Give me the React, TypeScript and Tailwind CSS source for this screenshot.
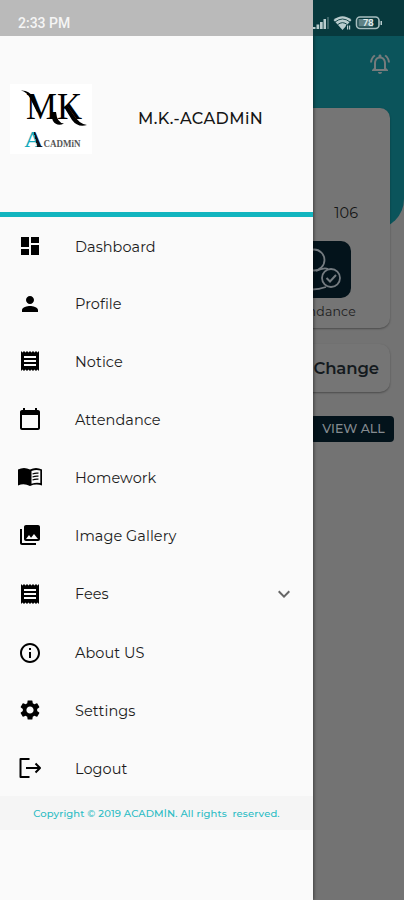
import type { ReactNode } from 'react'
import { IconType } from 'react-icons'
import {
  MdDashboard, MdPerson, MdReceipt, MdCalendarToday, MdPhotoLibrary,
  MdInfoOutline, MdSettings, MdKeyboardArrowDown, MdOutlineNotificationsActive,
} from 'react-icons/md'

const LogoutIcon = () => (
  <svg viewBox="0 0 24 24" className="size-6" fill="none" stroke="black" strokeWidth="2" strokeLinejoin="round">
    <path d="M11.500 3H2.500v18h9" />
    <path d="M8 12h13.500M17.500 7.500l4.500 4.500-4.500 4.500" />
  </svg>
)

const BookIcon = () => (
  <svg viewBox="0 0 24 24" className="size-6">
    <path d="M0 4.500Q6 1.500 12 4.500Q18 1.500 24 4.500V20.500Q18 18.500 12 21Q6 18 0 20.500Z" />
    <path d="M13.500 6Q18 4.200 22.300 5.500V18Q18 17 13.500 18.700Z" fill="#fafafa" />
    <path d="M14.500 9q3-1.200 6-.8M14.500 12q3-1.200 6-.8M14.500 15q3-1.200 6-.8" fill="none" stroke="black" strokeWidth="1.200" />
  </svg>
)

const Logo = () => (
  <svg viewBox="10 84 82 70" className="h-[70px] w-[82px] bg-white">
    <defs>
      <linearGradient id="letterA" x1="0" x2="1" y1="0" y2="-0.350">
        <stop offset="38%" stopColor="#16a9bb" />
        <stop offset="38%" stopColor="#101418" />
      </linearGradient>
    </defs>
    <g fontFamily="Liberation Serif, serif">
      <text x="26" y="118.500" fontSize="37" textLength="56" lengthAdjust="spacingAndGlyphs">MK</text>
      <text x="24.500" y="147" fontSize="23" fontWeight="bold" fill="url(#letterA)" textLength="18" lengthAdjust="spacingAndGlyphs">A</text>
      <text x="43.500" y="147" fontSize="9.500" fontWeight="bold" fill="#555" textLength="37" lengthAdjust="spacingAndGlyphs">CADMiN</text>
    </g>
    <path d="M21 90.500Q29 90 33 97L41 114 37 112 30 98Q27 92 21 90.500Z" />
    <path d="M51.500 112H56Q57 123 64 123.500Q57 127 53 121Q51.500 118 51.500 112Z" />
    <path d="M67 105L73 114Q79 124 87 125Q78 128 72 120L64 107Z" />
  </svg>
)

const AttendanceIcon = () => (
  <svg viewBox="294 241 57 57" className="size-[57px]" fill="none" stroke="#747b80" strokeWidth="1.800">
    <circle cx="314" cy="260" r="10.500" />
    <path d="M316 271Q324 267 328 269M297 287V279Q300 273 309 271M297 287Q312 292 326 287" />
    <circle cx="331" cy="278" r="9" fill="#03131b" />
    <path d="M326.500 278l3.500 3.500 6-6.500" strokeWidth="2" />
  </svg>
)

const StatusIcons = () => (
  <svg viewBox="0 0 74 20" className="h-5 w-[74px]" fill="#b9cccd">
    <path d="M0 14h2.500v2H0zM3.500 11.500h2.700v4.500H3.500zM7 9h2.700v7H7zM10.500 6h2.500v10h-2.500z" />
    <path d="M14 4h2v12h-2z" opacity=".3" />
    <path d="M20.500 7Q29.500 -.5 38.500 7L29.500 17Z" />
    <g fill="none" stroke="#07393d" strokeWidth=".9">
      <path d="M22 9Q29.500 3 37 9M24.500 11.800Q29.500 7.500 34.500 11.800" />
    </g>
    <path d="M33 12l4.500 0v5h-5z" fill="#07393d" />
    <path d="M34 12.500h1.200v4h-1.200zM36 12.500h1.200v4H36z" />
    <rect x="43.500" y="4" width="22.500" height="11.500" rx="3.500" fill="none" stroke="#a7bdbe" strokeWidth="1.600" />
    <path d="M45.500 6H60v7.500H45.500z" opacity=".5" />
    <path d="M67.500 8h1.500v4h-1.500z" />
    <text x="50" y="12.900" fontFamily="Inter, sans-serif" fontSize="9" fontWeight="600" fill="#e0eeee">78</text>
  </svg>
)

interface MenuItemProps {
  label: string
  icon?: IconType
  custom?: ReactNode
  expandable?: boolean
}

const items: MenuItemProps[] = [
  { label: 'Dashboard', icon: MdDashboard },
  { label: 'Profile', icon: MdPerson },
  { label: 'Notice', icon: MdReceipt },
  { label: 'Attendance', icon: MdCalendarToday },
  { label: 'Homework', custom: <BookIcon /> },
  { label: 'Image Gallery', icon: MdPhotoLibrary },
  { label: 'Fees', icon: MdReceipt, expandable: true },
  { label: 'About US', icon: MdInfoOutline },
  { label: 'Settings', icon: MdSettings },
  { label: 'Logout', custom: <LogoutIcon /> },
]

const MenuItem = ({ label, icon: Icon, custom, expandable }: MenuItemProps) => (
  <li className={`flex shrink-0 items-center pl-[18px] pr-[17px] ${expandable ? 'h-[60px]' : 'h-[57.8px]'}`}>
    {Icon ? <Icon size={24} className="text-black" /> : custom}
    <span className="ml-[33px] flex-1 pt-[3px] text-[14.5px] tracking-[0.05px] text-[#1c1c1c]">{label}</span>
    {expandable && <MdKeyboardArrowDown size={24} className="text-[#666]" />}
  </li>
)

const Drawer = () => (
  <aside className="absolute inset-y-0 left-0 flex w-[313px] flex-col bg-[#fafafa] shadow-[1px_0_3px_rgba(0,0,0,0.45)]">
    <div className="flex h-[217px] shrink-0 items-center border-b-[5px] border-[#12b5bf] pl-[10px] pt-[26px]">
      <Logo />
      <h1 className="ml-[46px] text-[16px] font-medium tracking-[0.42px] text-[#151515]">M.K.-ACADMiN</h1>
    </div>
    <ul className="flex flex-col">
      {items.map((item) => <MenuItem key={item.label} {...item} />)}
    </ul>
    <footer className="-mt-px flex h-[34px] shrink-0 items-center justify-center whitespace-pre bg-[#f5f5f5] pt-px text-[10px] font-medium tracking-[0.12px] text-[#2bbcc4]">
      Copyright © 2019 ACADMİN. All rights  reserved.
    </footer>
  </aside>
)

const Page = () => (
  <main className="h-full bg-[#737373]">
    <header className="flex h-[229px] flex-col items-end rounded-br-[30px] bg-[#0b545b] pt-[52px]">
      <MdOutlineNotificationsActive size={24} className="mr-3 text-[#757b7c]" />
    </header>
    <section className="relative -mt-[121px] mr-[14px] flex h-[220px] flex-col items-end rounded-[10px] bg-[#757575] pt-[95px] shadow-[0_1px_2px_rgba(0,0,0,0.35)]">
      <span className="mr-[32px] text-[14.5px] leading-5 text-[#161616]">106</span>
      <div className="mr-[39px] mt-[18px] size-[57px] rounded-[10px] bg-[#03131b]">
        <AttendanceIcon />
      </div>
      <span className="mr-[34px] mt-[5px] text-[12.5px] leading-[18px] tracking-[0.2px] text-[#1c1c1c]">Attendance</span>
    </section>
    <section className="mr-[14px] mt-4 flex h-[48px] items-center justify-end rounded-[10px] bg-[#757575] pr-[11px] pt-px shadow-[0_1px_2px_rgba(0,0,0,0.35)]">
      <span className="text-[16.5px] font-semibold tracking-[-0.1px] text-[#141a1e]">Change</span>
    </section>
    <div className="mr-[10px] mt-6 flex justify-end">
      <button className="h-[26px] w-[84px] rounded-[4px] bg-[#03131b] pl-[3px] pt-px text-[12.5px] font-medium text-[#858b90]">VIEW ALL</button>
    </div>
  </main>
)

export default function App() {
  return (
    <div className="relative h-[900px] w-[404px] overflow-hidden font-['Montserrat','Inter',sans-serif]">
      <Page />
      <Drawer />
      <div className="absolute inset-x-0 top-0 flex h-[35.5px] text-white">
        <div className="flex w-[313px] items-center bg-[#bababa] pl-[18px] pt-[12px] font-['Roboto',sans-serif] text-[14px] font-medium text-[#f5f5f5]">2:33 PM</div>
        <div className="flex flex-1 items-start bg-[#07393d] pt-[13px]">
          <StatusIcons />
        </div>
      </div>
    </div>
  )
}
